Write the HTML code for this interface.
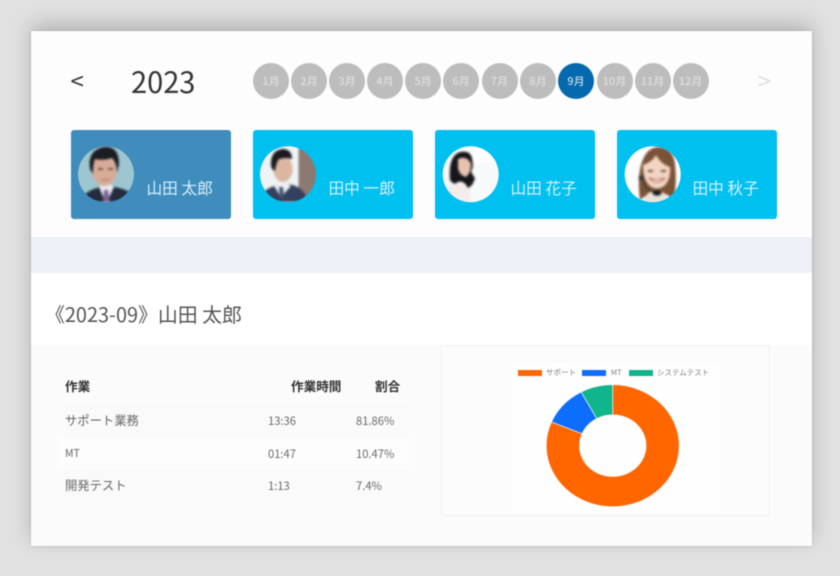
<!DOCTYPE html>
<html lang="ja">
<head>
<meta charset="utf-8">
<title>作業レポート</title>
<style>
html,body{margin:0;padding:0}
body{width:840px;height:576px;overflow:hidden;position:relative;background:#e1e1e1;font-family:"Noto Sans CJK JP","Liberation Sans",sans-serif}
#wrap{position:absolute;left:0;top:0;width:840px;height:576px;filter:blur(.55px);overflow:hidden;background:#e1e1e1}
.abs{position:absolute;white-space:nowrap;line-height:1}
#panel{position:absolute;left:31px;top:31px;width:781px;height:515px;background:#fff;box-shadow:0 -7px 20px rgba(0,0,0,.2),0 0 3px rgba(0,0,0,.14)}
.m{position:absolute;top:63px;width:36px;height:36px;border-radius:50%;background:#bdbdbd;color:#dedede;font-size:11px;font-weight:500;line-height:36px;text-align:center}
.m.on{background:#0569ae;color:#c4dbec}
.card{position:absolute;top:129.5px;height:89px;width:160.5px;border-radius:3px;background:#00c0f0}
.name{position:absolute;top:179px;font-size:15.7px;line-height:18px;color:#d5f2fc;white-space:nowrap}
.rowbg{position:absolute;left:58px;width:351px;height:33px;background:#fafafa}
.t{position:absolute;white-space:nowrap;font-size:11px;line-height:14px;color:#686868}
.h{font-weight:700;color:#333;font-size:12.6px}
.n{font-size:11.2px}
.av{filter:blur(1px)}
</style>
</head>
<body>
<div id="wrap">
  <div id="panel"></div>
  <div class="abs" style="left:31px;top:31px;width:781px;height:206px;background:#fdfdfe"></div>
  <div class="abs" style="left:31px;top:237px;width:781px;height:36px;background:#edf0f6"></div>
  <div class="abs" style="left:31px;top:345px;width:781px;height:201px;background:#fbfbfb"></div>

  <div class="abs" style="left:70.5px;top:70px;font-size:24px;color:#333;line-height:20px">&lt;</div>
  <div class="abs" style="left:131px;top:64px;font-size:29px;line-height:34px;color:#333">2023</div>
  <div class="abs" style="left:758px;top:70px;font-size:24px;color:#dfdfdf;line-height:20px">&gt;</div>

  <div class="m" style="left:253px">1月</div>
  <div class="m" style="left:291px">2月</div>
  <div class="m" style="left:329px">3月</div>
  <div class="m" style="left:367px">4月</div>
  <div class="m" style="left:405px">5月</div>
  <div class="m" style="left:443px">6月</div>
  <div class="m" style="left:481.5px">7月</div>
  <div class="m" style="left:520px">8月</div>
  <div class="m on" style="left:558px">9月</div>
  <div class="m" style="left:596.5px">10月</div>
  <div class="m" style="left:634.5px">11月</div>
  <div class="m" style="left:672.5px">12月</div>

  <div class="card" style="left:70.5px;background:#3f8cbd"></div>
  <div class="card" style="left:252.8px"></div>
  <div class="card" style="left:434.5px"></div>
  <div class="card" style="left:616.5px"></div>

  <svg class="abs" style="left:0;top:0" width="840" height="576" viewBox="0 0 840 576">
    <defs>
      <clipPath id="c1"><circle cx="31" cy="34.3" r="28"/></clipPath>
      <clipPath id="c2"><circle cx="33" cy="34.3" r="28"/></clipPath>
      <clipPath id="c3"><circle cx="32.7" cy="34.3" r="28"/></clipPath>
      <clipPath id="c4"><circle cx="32.7" cy="34.3" r="28"/></clipPath>
    </defs>

    <g transform="translate(75 140)"><g clip-path="url(#c1)"><g class="av">
      <rect x="-5" y="-5" width="80" height="80" fill="#9dc6d0"/>
      <path d="M9 62V56Q12 51 22 48L30 45L40 47Q50 49 56 53V62Z" fill="#232b3d"/>
      <path d="M24 47L31 64L39 47L34 43H27Z" fill="#e9e8ef"/>
      <path d="M29 50H33L35 62H28Z" fill="#7d6294"/>
      <ellipse cx="29.5" cy="30" rx="12.5" ry="16" fill="#d7ad98"/>
      <path d="M15 29Q12 11 28 7Q44 5 44 24L42 33Q42 23 37 18Q28 21 20 19Q18 24 18 34Z" fill="#1c1c24"/>
      <path d="M23 29h5M33 29h5" stroke="#4a3530" stroke-width="1.5"/>
      <path d="M26 39Q30 41 35 39" stroke="#a97665" stroke-width="1.2" fill="none"/>
    </g></g></g>

    <g transform="translate(255 140)"><g clip-path="url(#c2)"><g class="av">
      <rect x="-5" y="-5" width="80" height="80" fill="#eef3f6"/>
      <rect x="43" y="-5" width="30" height="80" fill="#8b7a72"/>
      <rect x="41" y="-5" width="2.5" height="80" fill="#f7f7f7"/>
      <path d="M8 62V53Q12 48 22 45L28 43L38 45Q47 48 51 56V62Z" fill="#33415f"/>
      <path d="M19 46L26 57L36 46L30 42H24Z" fill="#edf1f5"/>
      <path d="M24 47H28L29 58H25Z" fill="#3f5570"/>
      <ellipse cx="28" cy="29" rx="9.5" ry="13" fill="#dcb6a0"/>
      <path d="M16 26Q15 11 27 9Q37 9 37 19Q31 17 24 19Q21 23 20 31Q17 30 16 26Z" fill="#1a1a20"/>
    </g></g></g>

    <g transform="translate(438 140)"><g clip-path="url(#c3)"><g class="av">
      <rect x="-5" y="-5" width="80" height="80" fill="#f7f9fa"/>
      <rect x="20" y="5" width="50" height="18" fill="#fff"/>
      <path d="M6 62V50Q12 44 20 43Q28 46 32 50V66Z" fill="#f3ecea"/>
      <path d="M12 40Q10 16 22 12Q32 10 34 18Q36 28 33 31Q35 36 37 38Q35 46 30 48Q26 40 20 42Q16 46 12 40Z" fill="#17151a"/>
      <path d="M20 19Q29 15 33 24Q33 33 28 37Q21 35 20 28Z" fill="#e7c2b0"/>
    </g></g></g>

    <g transform="translate(620 140)"><g clip-path="url(#c4)"><g class="av">
      <rect x="-5" y="-5" width="80" height="80" fill="#fff"/>
      <path d="M20 60Q17 36 22 22Q27 7 39 7Q53 8 55 24Q57 40 54 60L46 54H28Z" fill="#7a5238"/>
      <path d="M22 64Q26 54 30 52H42Q47 54 50 64V70H22Z" fill="#e9e3dc"/>
      <path d="M23 25Q32 22 36 15Q41 24 50 27Q51 40 44 46Q37 51 30 46Q23 40 23 25Z" fill="#f3d4c2"/>
      <path d="M29 38Q37 46 45 38Q37 41 29 38Z" fill="#fff" stroke="#b5635a" stroke-width="1"/>
      <path d="M28 31h5M41 31h5" stroke="#3d2a20" stroke-width="1.4"/>
      <path d="M23 40Q25 50 34 52" stroke="#333" stroke-width="1" fill="none"/>
      <ellipse cx="37" cy="53" rx="4.5" ry="2.6" fill="#1b1b1b"/>
      <circle cx="21" cy="38" r="2.5" fill="#333"/>
    </g></g></g>

    <!-- donut -->
    <rect x="441.5" y="345.5" width="328" height="170" fill="#fcfcfc" stroke="#f1f1f1"/>
    <rect x="512" y="362" width="208" height="150" fill="#fefefe"/>
    <rect x="518" y="370" width="24" height="6" fill="#ff6600"/>
    <rect x="582" y="370" width="24" height="6" fill="#0d6efd"/>
    <rect x="629" y="370" width="24" height="6" fill="#10b58c"/>
    <text x="546" y="375" font-size="7.5" fill="#808080" font-family="'Noto Sans CJK JP',sans-serif">サポート</text>
    <text x="611" y="375" font-size="7.5" fill="#808080" font-family="'Noto Sans CJK JP',sans-serif">MT</text>
    <text x="657" y="375" font-size="7.5" fill="#808080" font-family="'Noto Sans CJK JP',sans-serif">システムテスト</text>
    <g stroke="#f4f4f4" stroke-width=".7">
      <path d="M612.7 384.7A66.5 61 0 1 1 551.5 421.9L582.1 433.7A33.3 30.8 0 1 0 612.7 414.9Z" fill="#ff6600"/>
      <path d="M551.5 421.9A66.5 61 0 0 1 581.1 392L596.8 418.6A33.3 30.8 0 0 0 582.1 433.7Z" fill="#0d6efd"/>
      <path d="M581.1 392A66.5 61 0 0 1 612.7 384.7V414.9A33.3 30.8 0 0 0 596.8 418.6Z" fill="#10b58c"/>
    </g>
  </svg>

  <div class="name" style="left:146.5px">山田 太郎</div>
  <div class="name" style="left:328.5px">田中 一郎</div>
  <div class="name" style="left:510.5px">山田 花子</div>
  <div class="name" style="left:692.5px">田中 秋子</div>

  <div class="abs" style="left:45px;top:301px;font-size:19.9px;line-height:26px;color:#555">《2023-09》山田 太郎</div>

  <div class="rowbg" style="top:404px"></div>
  <div class="rowbg" style="top:470px;height:31px"></div>
  <div class="abs" style="left:58px;top:437px;width:351px;height:33px;background:#fdfdfd"></div>

  <div class="t h" style="left:65px;top:379px">作業</div>
  <div class="t h" style="left:291px;top:379px">作業時間</div>
  <div class="t h" style="left:375px;top:379px">割合</div>

  <div class="t" style="left:65px;top:413px;font-size:12.3px">サポート業務</div>
  <div class="t n" style="left:268px;top:414px">13:36</div>
  <div class="t n" style="left:356px;top:414px">81.86%</div>

  <div class="t" style="left:65px;top:447px;font-size:10.5px">MT</div>
  <div class="t n" style="left:268px;top:447px">01:47</div>
  <div class="t n" style="left:356px;top:447px">10.47%</div>

  <div class="t" style="left:65px;top:478px;font-size:12.3px">開発テスト</div>
  <div class="t n" style="left:268px;top:479px">1:13</div>
  <div class="t n" style="left:356px;top:479px">7.4%</div>
</div>
</body>
</html>
